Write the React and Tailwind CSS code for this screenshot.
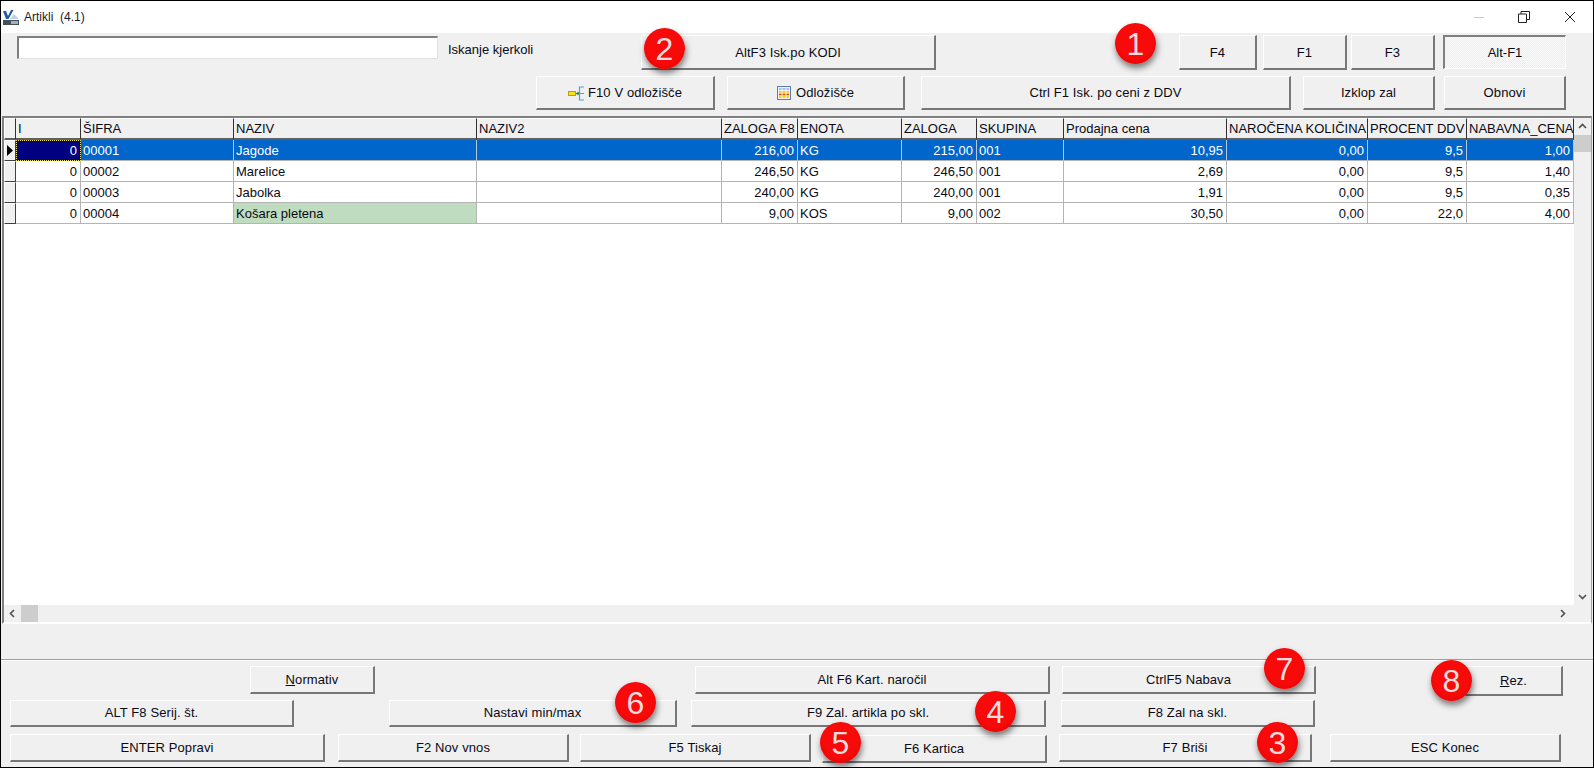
const font = { fontFamily: '"Liberation Sans", Arial, sans-serif' };

function Btn({ className = "", children }) {
  return (
    <button className={"flex shrink-0 items-center justify-center border-t border-l border-t-white border-l-white border-b-2 border-r-2 border-b-[#777777] border-r-[#777777] bg-[#f0f0f0] text-[13px] tracking-[0.1px] text-[#0a0a14] " + className}>
      {children}
    </button>
  );
}

function Badge({ className = "", children }) {
  return (
    <div className={"absolute z-10 flex h-[41px] w-[41px] items-center justify-center rounded-full bg-[radial-gradient(circle_at_50%_45%,#f80a0a_55%,#d80000_100%)] text-[32px] leading-none text-[#f0dcdc] shadow-[1px_4px_6px_rgba(0,0,0,0.5)] " + className}>
      {children}
    </div>
  );
}

const widths = ["w-[65px]", "w-[153px]", "w-[243px]", "w-[245px]", "w-[76px]", "w-[104px]", "w-[75px]", "w-[87px]", "w-[163px]", "w-[141px]", "w-[99px]", "w-[107px]"];
const heads = ["I", "ŠIFRA", "NAZIV", "NAZIV2", "ZALOGA F8", "ENOTA", "ZALOGA", "SKUPINA", "Prodajna cena", "NAROČENA KOLIČINA", "PROCENT DDV", "NABAVNA_CENA"];
const rightCols = [0, 4, 6, 8, 9, 10, 11];
const rows = [
  ["0", "00001", "Jagode", "", "216,00", "KG", "215,00", "001", "10,95", "0,00", "9,5", "1,00"],
  ["0", "00002", "Marelice", "", "246,50", "KG", "246,50", "001", "2,69", "0,00", "9,5", "1,40"],
  ["0", "00003", "Jabolka", "", "240,00", "KG", "240,00", "001", "1,91", "0,00", "9,5", "0,35"],
  ["0", "00004", "Košara pletena", "", "9,00", "KOS", "9,00", "002", "30,50", "0,00", "22,0", "4,00"],
];

function cellClass(ri, ci) {
  const right = rightCols.includes(ci);
  let color = "bg-white text-[#0a0a14] border-r-[#b4b4b4] border-b-[#b4b4b4]";
  if (ri === 0) color = ci === 0
    ? "bg-[#000080] text-white border border-dotted border-[#f5e663]"
    : "bg-[#0066cc] text-white border-r-[#b4c8dc] border-b-[#b4b4b4]";
  if (ri === 3 && ci === 2) color = "bg-[#c0dcc0] text-[#0a0a14] border-r-[#b4b4b4] border-b-[#b4b4b4]";
  return "flex h-full shrink-0 items-center overflow-hidden whitespace-nowrap pt-[1px] text-[13px] border-r border-b " + (right ? "justify-end pr-[3px] " : "pl-[2px] ") + widths[ci] + " " + color;
}

function Chevron({ d }) {
  return (
    <svg width="9" height="9" viewBox="0 0 9 9" className="shrink-0">
      <path d={d} fill="none" stroke="#505050" strokeWidth="1.6" />
    </svg>
  );
}

function TitleIcon() {
  return (
    <svg width="16" height="15" viewBox="0 0 16 15" className="shrink-0">
      <path d="M0 1 L3 1 L5 6 L8 0 L10.5 0 L5.5 9 L3 9 Z" fill="#1f5aa8" />
      <path d="M7 9 L11 4 L16 9 Z" fill="#bcd2ea" />
      <rect x="0" y="10" width="16" height="5" fill="#46505a" />
      <rect x="8" y="11" width="7" height="3" fill="#a6b0ba" />
    </svg>
  );
}

function ToClip() {
  return (
    <svg width="17" height="15" viewBox="0 0 17 15" className="mr-[3px] shrink-0">
      <rect x="0.5" y="5.5" width="7" height="4" fill="#f5e21a" stroke="#c09a10" />
      <path d="M8 7.5 H11" stroke="#1d8a2a" strokeWidth="1.2" />
      <path d="M9.5 5.5 L12 7.5 L9.5 9.5 Z" fill="#1d8a2a" />
      <path d="M16 1 H11.5 V14 H16 M11.5 7.5 H16" fill="none" stroke="#4aa3e8" strokeWidth="1.2" />
    </svg>
  );
}

function GridIcon() {
  return (
    <svg width="14" height="14" viewBox="0 0 14 14" className="mr-[5px] shrink-0">
      <rect x="0.5" y="0.5" width="13" height="13" fill="#eef3fb" stroke="#5a7fb0" />
      <rect x="2" y="2" width="10" height="2" fill="#a8c0e4" />
      <rect x="2" y="5" width="10" height="3" fill="#f8d020" />
      <rect x="2" y="8" width="10" height="1" fill="#d84a10" />
      <rect x="2" y="9" width="10" height="3" fill="#f8d020" />
      <path d="M5 2 V12 M9 2 V12" stroke="#eef3fb" strokeWidth="1" />
    </svg>
  );
}

export default function App() {
  return (
    <div style={font} className="relative flex h-[768px] w-full flex-col overflow-hidden border border-black bg-[#f0f0f0] text-[#0a0a14]">
      {/* title bar */}
      <div className="flex h-[32px] shrink-0 items-center bg-white pl-[2px]">
        <TitleIcon />
        <span className="ml-[5px] whitespace-pre text-[12px] text-[#1a1a2a]">Artikli  (4.1)</span>
        <div className="ml-auto flex items-center pr-[17px]">
          <svg width="12" height="12" viewBox="0 0 12 12"><path d="M1 6.5 H11" stroke="#c8c8c8" /></svg>
          <svg width="12" height="12" viewBox="0 0 12 12" className="ml-[33px]">
            <path d="M0.5 3 H8.5 V11.5 H0.5 Z M3 3 V0.5 H11.5 V8.5 H8.5" fill="none" stroke="#222222" />
          </svg>
          <svg width="12" height="12" viewBox="0 0 12 12" className="ml-[34px]">
            <path d="M1 1 L11 11 M11 1 L1 11" stroke="#222222" />
          </svg>
        </div>
      </div>

      {/* top toolbar */}
      <div className="h-[83px] shrink-0 pt-[2px]">
        <div className="flex h-[35px] items-start">
          <div className="ml-[16px] mt-[1px] h-[23px] w-[421px] shrink-0 border-t-2 border-l-2 border-t-[#808080] border-l-[#808080] border-b border-r border-b-[#e0e0e0] border-r-[#e0e0e0] bg-white" />
          <span className="ml-[10px] mt-[5px] w-[193px] shrink-0 text-[13px]">Iskanje kjerkoli</span>
          <Btn className="h-[35px] w-[295px] pt-[1px]">AltF3 Isk.po KODI</Btn>
          <Btn className="ml-[243px] h-[35px] w-[78px] pt-[1px]">F4</Btn>
          <Btn className="ml-[6px] h-[35px] w-[84px] pt-[1px]">F1</Btn>
          <Btn className="ml-[4px] h-[35px] w-[84px] pt-[1px]">F3</Btn>
          <button className="ml-[8px] flex h-[34px] w-[123px] shrink-0 items-center justify-center border-t-2 border-l-2 border-t-[#808080] border-l-[#808080] border-b border-r border-b-white border-r-white bg-[repeating-conic-gradient(#eeeeee_0%_25%,#fafafa_0%_50%)] bg-[length:2px_2px] pt-[1px] text-[13px]">Alt-F1</button>
        </div>
        <div className="mt-[6px] flex h-[34px]">
          <Btn className="ml-[535px] h-[34px] w-[179px] pt-[1px]"><ToClip />F10 V odložišče</Btn>
          <Btn className="ml-[12px] h-[34px] w-[178px] pt-[1px]"><GridIcon />Odložišče</Btn>
          <Btn className="ml-[16px] h-[34px] w-[370px] pt-[1px]">Ctrl F1 Isk. po ceni z DDV</Btn>
          <Btn className="ml-[12px] h-[34px] w-[132px] pt-[1px]">Izklop zal</Btn>
          <Btn className="ml-[9px] h-[34px] w-[122px] pt-[1px]">Obnovi</Btn>
        </div>
      </div>

      {/* data grid */}
      <div className="ml-[1px] mr-[1px] flex h-[508px] shrink-0 flex-col border-t-2 border-l-2 border-t-[#808080] border-l-[#808080] border-b-2 border-b-white border-r border-r-[#a0a0a0]">
        <div className="flex min-h-0 flex-1">
          <div className="min-w-0 flex-1 overflow-hidden bg-white">
            <div className="flex h-[22px] bg-[#f0f0f0]">
              <div className="h-full w-[12px] shrink-0 border-t border-l border-t-white border-l-white border-b-2 border-r border-b-[#606060] border-r-[#303030]" />
              {heads.map((h, i) => (
                <div key={h} className={"flex h-full shrink-0 items-center overflow-hidden whitespace-nowrap border-t border-t-white border-b-2 border-r border-b-[#606060] border-r-[#303030] pl-[2px] text-[13px] " + widths[i]}>{h}</div>
              ))}
            </div>
            {rows.map((r, ri) => (
              <div key={ri} className="flex h-[21px]">
                <div className="flex h-full w-[12px] shrink-0 items-center justify-center border-t border-l border-t-white border-l-white border-b border-r border-b-[#404040] border-r-[#404040] bg-[#f0f0f0]">
                  {ri === 0 && (
                    <svg width="6" height="11" viewBox="0 0 6 11"><path d="M0 0 L6 5.5 L0 11 Z" fill="#000000" /></svg>
                  )}
                </div>
                {r.map((c, ci) => (
                  <div key={ci} className={cellClass(ri, ci)}>{c}</div>
                ))}
              </div>
            ))}
          </div>
          <div className="flex w-[17px] shrink-0 flex-col items-center bg-[#f0f0f0]">
            <div className="flex h-[17px] w-full items-center justify-center"><Chevron d="M1 6 L4.5 2.5 L8 6" /></div>
            <div className="h-[17px] w-full bg-[#cdcdcd]" />
            <div className="mt-auto flex h-[17px] w-full items-center justify-center"><Chevron d="M1 3 L4.5 6.5 L8 3" /></div>
          </div>
        </div>
        <div className="flex h-[17px] shrink-0 items-center bg-[#f0f0f0]">
          <div className="flex h-full w-[17px] items-center justify-center"><Chevron d="M6 1 L2.5 4.5 L6 8" /></div>
          <div className="h-full w-[17px] bg-[#cdcdcd]" />
          <div className="ml-auto mr-[20px] flex h-full w-[17px] items-center justify-center"><Chevron d="M3 1 L6.5 4.5 L3 8" /></div>
        </div>
      </div>

      {/* status area */}
      <div className="h-[36px] shrink-0 border-b border-b-[#a0a0a0]" />

      {/* bottom toolbar */}
      <div className="flex-1 border-t border-t-white pt-[5px]">
        <div className="flex h-[34px] items-start">
          <Btn className="ml-[249px] h-[28px] w-[125px]"><span><span className="underline">N</span>ormativ</span></Btn>
          <Btn className="ml-[320px] h-[28px] w-[355px]">Alt F6 Kart. naročil</Btn>
          <Btn className="ml-[12px] h-[28px] w-[254px]">CtrlF5 Nabava</Btn>
          <Btn className="ml-[149px] h-[30px] w-[98px]"><span><span className="underline">R</span>ez.</span></Btn>
        </div>
        <div className="flex h-[34px] items-start">
          <Btn className="ml-[9px] h-[27px] w-[284px]">ALT F8 Serij. št.</Btn>
          <Btn className="ml-[95px] h-[27px] w-[288px]">Nastavi min/max</Btn>
          <Btn className="ml-[14px] h-[27px] w-[355px]">F9 Zal. artikla po skl.</Btn>
          <Btn className="ml-[15px] h-[27px] w-[254px]">F8 Zal na skl.</Btn>
        </div>
        <div className="flex h-[28px] items-start">
          <Btn className="ml-[9px] h-[28px] w-[315px]">ENTER Popravi</Btn>
          <Btn className="ml-[13px] h-[28px] w-[231px]">F2 Nov vnos</Btn>
          <Btn className="ml-[11px] h-[28px] w-[231px]">F5 Tiskaj</Btn>
          <Btn className="ml-[11px] mt-[1px] h-[28px] w-[225px]">F6 Kartica</Btn>
          <Btn className="ml-[12px] h-[28px] w-[253px]">F7 Briši</Btn>
          <Btn className="ml-[18px] h-[28px] w-[231px]">ESC Konec</Btn>
        </div>
      </div>

      {/* numbered callouts */}
      <Badge className="left-[1114px] top-[22px]">1</Badge>
      <Badge className="left-[643px] top-[27px]">2</Badge>
      <Badge className="left-[1256px] top-[721px]">3</Badge>
      <Badge className="left-[974px] top-[690px]">4</Badge>
      <Badge className="left-[819px] top-[721px]">5</Badge>
      <Badge className="left-[614px] top-[681px]">6</Badge>
      <Badge className="left-[1263px] top-[647px]">7</Badge>
      <Badge className="left-[1430px] top-[659px]">8</Badge>
    </div>
  );
}
